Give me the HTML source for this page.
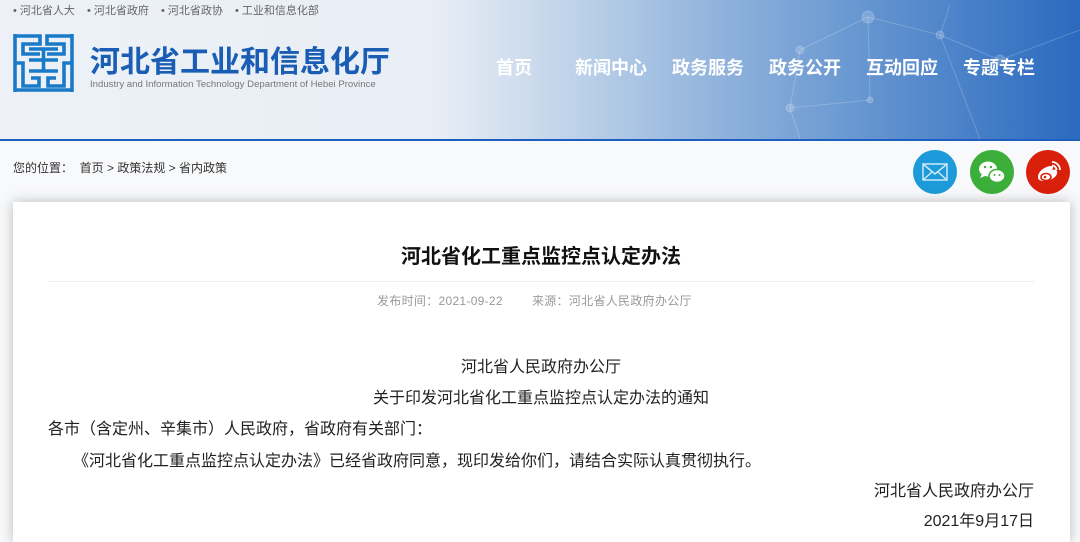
<!DOCTYPE html>
<html><head><meta charset="utf-8"><style>
*{margin:0;padding:0;box-sizing:border-box}
body{width:1080px;height:535px;overflow:hidden;background:#f8f9fb;font-family:"Liberation Sans","Noto Sans CJK SC",sans-serif;position:relative}
.hdr{position:absolute;left:0;top:0;width:1080px;height:139px;background:linear-gradient(90deg,#edf1f7 0%,#e9eef6 40%,#c9d9ec 50%,#9fbde0 62%,#6c9ad2 78%,#2a6abf 100%);}
.bl{position:absolute;left:0;top:139px;width:1080px;height:2px;background:#1c5fc0}
.top{position:absolute;top:2px;font-size:11px;color:#666;white-space:nowrap}
.t1{position:absolute;left:90px;top:37px;font-size:30px;font-weight:bold;color:#1a5db4;white-space:nowrap}
.t2{position:absolute;left:90px;top:79px;font-size:9.6px;color:#777;white-space:nowrap}
.nav{position:absolute;top:54px;font-size:18px;font-weight:bold;color:#fff;white-space:nowrap}
.bc{position:absolute;left:13px;top:159px;font-size:12px;color:#333;white-space:nowrap}
.ic{position:absolute;top:150px;width:44px;height:44px;border-radius:50%}
.card{position:absolute;left:13px;top:202px;width:1057px;height:340px;background:#fff;box-shadow:0 0 12px rgba(0,0,0,.25)}
.ttl{position:absolute;left:0;width:1082px;top:240px;text-align:center;font-size:20px;font-weight:bold;color:#111}
.hr{position:absolute;left:48px;top:281px;width:986px;height:1px;background:#eee}
.meta{position:absolute;left:377px;top:292px;font-size:12px;color:#999;white-space:nowrap;letter-spacing:.3px}
.p{position:absolute;font-size:16px;color:#222;white-space:nowrap;line-height:20px}
</style></head><body>
<div class="hdr">
<svg width="1080" height="139" style="position:absolute;left:0;top:0" stroke="rgba(255,255,255,.2)" fill="rgba(255,255,255,.18)" stroke-width="1">
<line x1="800" y1="50" x2="868" y2="17"/><line x1="868" y1="17" x2="940" y2="35"/><line x1="868" y1="17" x2="870" y2="100"/><line x1="940" y1="35" x2="1000" y2="60"/><line x1="940" y1="35" x2="950" y2="5"/><line x1="800" y1="50" x2="790" y2="108"/><line x1="790" y1="108" x2="870" y2="100"/><line x1="1000" y1="60" x2="1080" y2="30"/><line x1="940" y1="35" x2="980" y2="139"/><line x1="790" y1="108" x2="800" y2="139"/>
<circle cx="868" cy="17" r="6"/><circle cx="800" cy="50" r="4"/><circle cx="940" cy="35" r="4"/><circle cx="1000" cy="60" r="5"/><circle cx="790" cy="108" r="4"/><circle cx="870" cy="100" r="3"/>
</svg>
<div class="top" style="left:13px">• 河北省人大</div>
<div class="top" style="left:87px">• 河北省政府</div>
<div class="top" style="left:161px">• 河北省政协</div>
<div class="top" style="left:235px">• 工业和信息化部</div>
<svg style="position:absolute;left:13px;top:34px" width="61" height="58" fill="none" stroke="#1a7ac8" stroke-width="3.6">
<path d="M2 0V58M59 0V58"/>
<path d="M2 2H27V10H10V20H27"/><path d="M59 2H34V10H51V20H34"/>
<path d="M16 15H45"/><path d="M30.5 15V37"/><path d="M16 26H45"/><path d="M16 37H45"/>
<path d="M2 29H10V52H26V44H18"/><path d="M59 29H51V52H35V44H43"/>
<path d="M2 56H59"/>
</svg>
<div class="t1">河北省工业和信息化厅</div>
<div class="t2">Industry and Information Technology Department of Hebei Province</div>
<div class="nav" style="left:496px">首页</div>
<div class="nav" style="left:575px">新闻中心</div>
<div class="nav" style="left:672px">政务服务</div>
<div class="nav" style="left:769px">政务公开</div>
<div class="nav" style="left:866px">互动回应</div>
<div class="nav" style="left:963px">专题专栏</div>
</div>
<div class="bl"></div>
<div class="bc">您的位置：&nbsp;&nbsp;首页 &gt; 政策法规 &gt; 省内政策</div>
<div class="ic" style="left:913px;background:#1c9ad9"><svg width="44" height="44" fill="none" stroke="#cfe9f8" stroke-width="1.5"><rect x="10" y="14" width="24" height="16"/><path d="M10 14L22 24L34 14M10 30L19 22M34 30L25 22"/></svg></div>
<div class="ic" style="left:970px;background:#3cae3a"><svg width="44" height="44" fill="#fff"><ellipse cx="18" cy="19" rx="9" ry="7.5"/><path d="M12 24l-2 4 5-2z"/><ellipse cx="27" cy="26" rx="8" ry="6.5" stroke="#3cae3a" stroke-width="1.5"/><circle cx="15" cy="17" r="1.2" fill="#3cae3a"/><circle cx="21" cy="17" r="1.2" fill="#3cae3a"/><circle cx="24.5" cy="25" r="1" fill="#3cae3a"/><circle cx="29.5" cy="25" r="1" fill="#3cae3a"/></svg></div>
<div class="ic" style="left:1026px;background:#d8200a"><svg width="44" height="44" fill="none" stroke="#fff" stroke-width="2.2"><path d="M12 27c0-6 8-11 13-11 3 0 2 3 1 4 3-1 6 0 5 3 0 4-7 8-12 8s-7-1-7-4z" fill="#fff" stroke="none"/><ellipse cx="20" cy="27" rx="5" ry="3.5" stroke="#d8200a" stroke-width="1.6"/><circle cx="19" cy="27" r="1.3" fill="#d8200a" stroke="none"/><path d="M26 12a8 8 0 0 1 8 8M26 15.5a4.5 4.5 0 0 1 4.5 4.5" stroke-width="1.8"/></svg></div>
<div class="card"></div>
<div class="ttl">河北省化工重点监控点认定办法</div>
<div class="hr"></div>
<div class="meta">发布时间：2021-09-22&nbsp;&nbsp;&nbsp;&nbsp;&nbsp;&nbsp;&nbsp;&nbsp;来源：河北省人民政府办公厅</div>
<div class="p" style="left:0;width:1082px;text-align:center;top:358px">河北省人民政府办公厅</div>
<div class="p" style="left:0;width:1082px;text-align:center;top:389px">关于印发河北省化工重点监控点认定办法的通知</div>
<div class="p" style="left:48px;top:420px">各市（含定州、辛集市）人民政府，省政府有关部门：</div>
<div class="p" style="left:73px;top:452px">《河北省化工重点监控点认定办法》已经省政府同意，现印发给你们，请结合实际认真贯彻执行。</div>
<div class="p" style="right:46px;top:482px">河北省人民政府办公厅</div>
<div class="p" style="right:46px;top:512px">2021年9月17日</div>
</body></html>
